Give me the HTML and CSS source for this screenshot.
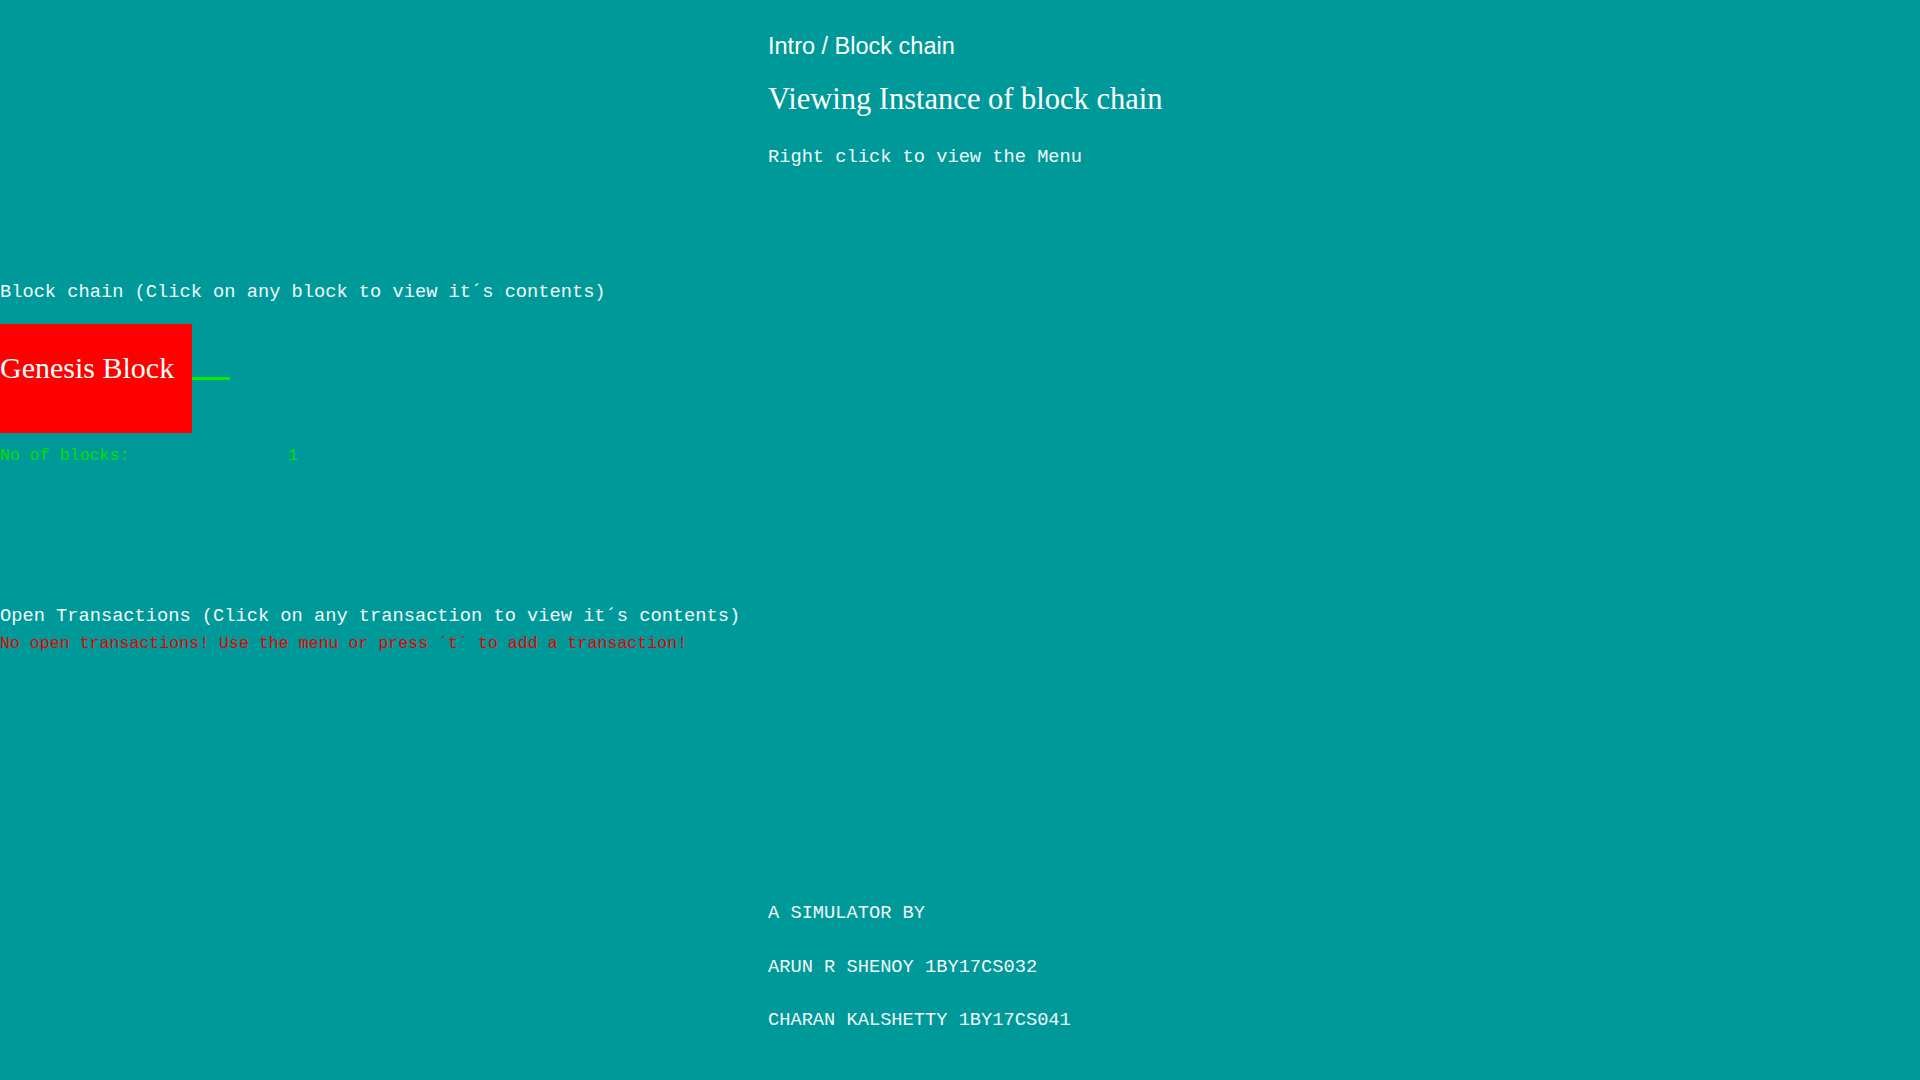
FILE: index.html
```html
<!DOCTYPE html>
<html lang="en">
<head>
<meta charset="utf-8">
<title>Block chain</title>
<link rel="stylesheet" href="styles.css">
</head>
<body>
<main class="screen">
  <header class="intro">
    <div class="crumb">Intro / Block chain</div>
    <h1 class="title">Viewing Instance of block chain</h1>
    <p class="hint mono">Right click to view the Menu</p>
  </header>

  <section class="chain">
    <h2 class="section-title mono">Block chain (Click on any block to view it´s contents)</h2>
    <div class="blocks">
      <div class="block">
        <span class="block-name">Genesis Block</span>
      </div>
      <div class="link"></div>
    </div>
    <div class="count small">
      <span class="count-label">No of blocks:</span>
      <span class="count-value">1</span>
    </div>
  </section>

  <section class="tx">
    <h2 class="section-title mono">Open Transactions (Click on any transaction to view it´s contents)</h2>
    <p class="tx-empty small">No open transactions! Use the menu or press ´t´ to add a transaction!</p>
  </section>

  <footer class="credits">
    <p class="mono credit first">A SIMULATOR BY</p>
    <p class="mono credit">ARUN R SHENOY 1BY17CS032</p>
    <p class="mono credit">CHARAN KALSHETTY 1BY17CS041</p>
  </footer>
</main>
</body>
</html>
```

FILE: styles.css
```css
html, body {
  margin: 0;
  padding: 0;
  background: #009999;
}

body {
  width: 1920px;
  height: 1080px;
  overflow: hidden;
  color: #ffffff;
}

.screen {
  display: flex;
  flex-direction: column;
  padding-top: 35px;
}

.mono {
  font-family: "Liberation Mono", "DejaVu Sans Mono", monospace;
  font-size: 18.7px;
  line-height: 18.5px;
  font-weight: normal;
  margin: 0;
  color: #f0fafa;
}

.small {
  font-family: "Liberation Mono", "DejaVu Sans Mono", monospace;
  font-size: 16.6px;
  line-height: 16.5px;
  margin: 0;
}

/* header */
.intro {
  padding-left: 768px;
  display: flex;
  flex-direction: column;
}

.crumb {
  font-family: "Liberation Sans", Arial, sans-serif;
  font-size: 23.5px;
  line-height: 22.5px;
}

.title {
  font-family: "Liberation Serif", "Times New Roman", serif;
  font-size: 30.5px;
  line-height: 30px;
  font-weight: normal;
  margin: 26px 0 0 0;
}

.hint {
  margin-top: 34px;
}

/* chain */
.chain {
  margin-top: 117px;
  display: flex;
  flex-direction: column;
}

.blocks {
  display: flex;
  align-items: flex-start;
  margin-top: 22px;
}

.block {
  width: 192px;
  height: 109px;
  background: #ff0000;
  display: flex;
  flex-direction: column;
  box-sizing: border-box;
  padding-top: 29px;
}

.block-name {
  font-family: "Liberation Serif", "Times New Roman", serif;
  font-size: 30px;
  line-height: 30px;
  color: #ffffff;
  white-space: nowrap;
}

.link {
  width: 38px;
  height: 3px;
  background: #00ee00;
  margin-top: 53px;
}

.count {
  display: grid;
  grid-template-columns: 288px auto;
  margin-top: 15px;
  color: #00e000;
}

/* transactions */
.tx {
  margin-top: 143px;
  display: flex;
  flex-direction: column;
}

.tx-empty {
  margin-top: 10px;
  color: #e80000;
}

/* credits */
.credits {
  padding-left: 768px;
  margin-top: 252px;
  display: flex;
  flex-direction: column;
  gap: 35px;
}
```
